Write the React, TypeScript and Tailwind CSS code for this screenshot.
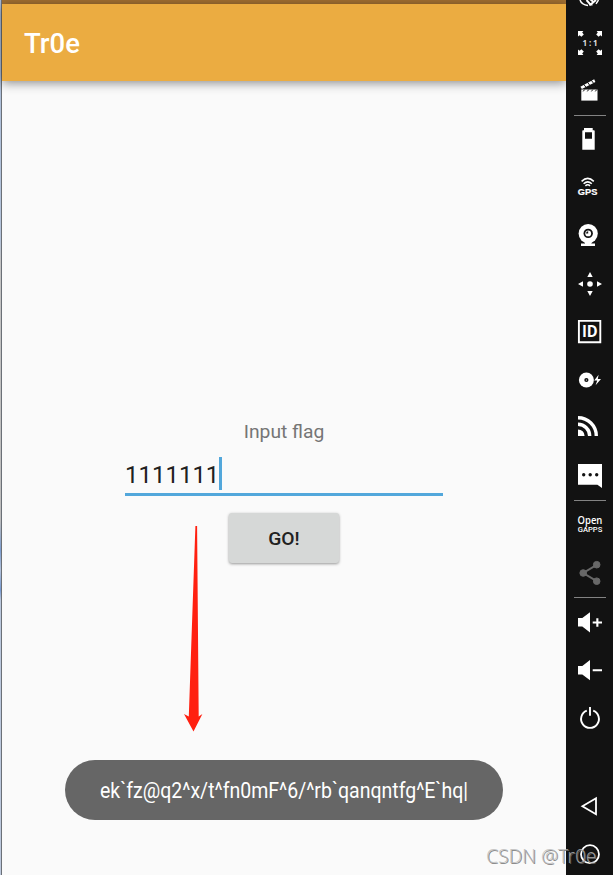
import type { ReactNode } from 'react';

const TOAST_TEXT = 'ek`fz@q2^x/t^fn0mF^6/^rb`qanqntfg^E`hq|';

function ToolIcon({ children, label }: { children: ReactNode; label: string }) {
  return (
    <button className="block h-12 w-[47px] shrink-0 text-white" aria-label={label}>
      <svg className="block" width="47" height="48" viewBox="0 0 47 48" fill="currentColor">
        {children}
      </svg>
    </button>
  );
}

function Divider() {
  return <div className="mx-2 h-px w-8 shrink-0 bg-[#838383]" />;
}

function Toolbar() {
  return (
    <aside className="flex h-full w-[47px] shrink-0 flex-col overflow-hidden bg-[#121212]">
      <div className="h-[19px] shrink-0 text-white">
        <svg width="47" height="19" viewBox="0 0 47 19" fill="none" stroke="currentColor">
          <path d="M14 0c1 3 4 5 8 5.4" strokeWidth="1.5" />
          <path d="M20.5 0l4 4.6L30 0M24 -1l3.5 3M23 4.6h3.5" strokeWidth="2" />
          <path d="M30 3.8L32.5 0" strokeWidth="1.4" />
        </svg>
      </div>
      <ToolIcon label="Pixel perfect">
        <path d="M12 12h5.4l-1.2 1.6 1.6 1.8-2.4 2.4-1.8-1.6-1.6 1.2zM36 12v5.4l-1.6-1.2-1.8 1.6-2.4-2.4 1.6-1.8-1.2-1.6zM12 36v-5.4l1.6 1.2 1.8-1.6 2.4 2.4-1.6 1.8 1.2 1.6zM36 36h-5.4l1.2-1.6-1.6-1.8 2.4-2.4 1.8 1.6 1.6-1.2z" />
        <text
          x="16.6"
          y="26.9"
          fontSize="8"
          fontWeight="700"
          fontFamily="'Open Sans'"
          textLength="15"
          className="fill-[#dddddd]"
        >
          1 : 1
        </text>
      </ToolIcon>
      <ToolIcon label="Screencast">
        <path d="M15.3 22.5H31.5V33.6H15.3z" />
        <path d="M14.4 19.8L28.2 12.3l1.2 2.6-13.5 7.2z" />
        <path
          d="M17.6 17.2l2.2 2.8M21.4 15.2l2.2 2.8M25.2 13.2l2.2 2.8M17.2 24.4l1.4-1.8M21.3 24.4l1.4-1.8M25.4 24.4l1.4-1.8M29.3 24.4l1.4-1.8"
          stroke="#121212"
          strokeWidth="1"
        />
      </ToolIcon>
      <Divider />
      <ToolIcon label="Battery">
        <path
          fillRule="evenodd"
          d="M18 12h8.7v2.2h1.2q.8 0 .8.8v18.7H16.3V15q0-.8.8-.8H18zM19 16.3v6.5h7v-6.5z"
        />
      </ToolIcon>
      <ToolIcon label="GPS">
        <g fill="none" stroke="currentColor" strokeWidth="1.5">
          <path d="M15.6 17.4q6.1-6 12.2 0M17.6 19.8q4.1-3.8 8.2 0" />
          <path d="M19.4 21.9q2.3-2.2 4.6 0" />
        </g>
        <text
          x="11.8"
          y="31"
          fontSize="9.2"
          fontWeight="700"
          fontFamily="'Liberation Sans'"
          textLength="19.6"
          lengthAdjust="spacingAndGlyphs"
          stroke="currentColor"
          strokeWidth="0.2"
        >
          GPS
        </text>
      </ToolIcon>
      <ToolIcon label="Camera">
        <circle cx="22.2" cy="21.6" r="9.6" />
        <path d="M19 29h6.4v2.6H29V34H15v-2.4h4z" />
        <circle cx="22.2" cy="21.4" r="4.7" fill="#121212" />
        <circle cx="22.2" cy="21.4" r="2.9" />
        <path d="M22.2 21.4v-2.2a2.2 2.2 0 0 0-2.2 2.2z" fill="#121212" />
      </ToolIcon>
      <ToolIcon label="Rotate">
        <circle cx="24" cy="24" r="2.8" />
        <path d="M24 12l2.7 5h-5.4zM24 36l2.7-5h-5.4zM12 24l5-2.7v5.4zM36 24l-5-2.7v5.4z" />
      </ToolIcon>
      <ToolIcon label="Identifiers">
        <path d="M12.9 12.9h21.4v21.4H12.9z" fill="none" stroke="currentColor" strokeWidth="1.9" />
        <text
          x="15.9"
          y="29.4"
          fontSize="15.8"
          fontWeight="700"
          fontFamily="'Open Sans'"
          textLength="15.8"
          lengthAdjust="spacingAndGlyphs"
        >
          ID
        </text>
      </ToolIcon>
      <ToolIcon label="Disk IO">
        <circle cx="20.4" cy="24" r="7.5" />
        <circle cx="20.4" cy="24" r="2.1" fill="#121212" />
        <circle cx="20.4" cy="24" r="0.6" />
        <path d="M32.6 18.8l-4.4 5.7h3l-1.6 4.7 5.4-6.3h-3.2z" />
      </ToolIcon>
      <ToolIcon label="Network">
        <g fill="none" stroke="currentColor" strokeWidth="3.4">
          <path d="M12 13.7A18.3 18.3 0 0 1 30.3 32" />
          <path d="M12 20.3A11.7 11.7 0 0 1 23.7 32" />
        </g>
        <path d="M12 25.4A6.6 6.6 0 0 1 18.6 32H12z" />
      </ToolIcon>
      <ToolIcon label="Phone">
        <path d="M12 12h24v24l-4.6-3.3H12z" />
        <g fill="#121212">
          <circle cx="17.7" cy="22.7" r="1.7" />
          <circle cx="24.2" cy="22.7" r="1.7" />
          <circle cx="30.7" cy="22.7" r="1.7" />
        </g>
      </ToolIcon>
      <Divider />
      <ToolIcon label="Open GApps">
        <text
          x="11.6"
          y="23"
          fontSize="10.6"
          fontWeight="600"
          fontFamily="'Open Sans'"
          textLength="24.8"
          lengthAdjust="spacingAndGlyphs"
        >
          Open
        </text>
        <text
          x="11.7"
          y="31.2"
          fontSize="7.2"
          fontWeight="500"
          fontFamily="Roboto"
          textLength="24.6"
          lengthAdjust="spacingAndGlyphs"
        >
          GAPPS
        </text>
      </ToolIcon>
      <ToolIcon label="Share">
        <g fill="#686868" stroke="#686868">
          <path d="M30.7 15.8L17.2 24l13.5 8.2" fill="none" strokeWidth="2" />
          <circle cx="30.7" cy="15.7" r="3.3" />
          <circle cx="17.2" cy="24" r="3.3" />
          <circle cx="30.7" cy="32.2" r="3.3" />
        </g>
      </ToolIcon>
      <Divider />
      <ToolIcon label="Volume up">
        <path d="M12 20h4.3L24 14.2v20.2l-7.7-5.8H12zM30.3 20.3h2.1v3.2H36v2.1h-3.6v3.2h-2.1v-3.2h-3.6v-2.1h3.6z" />
      </ToolIcon>
      <ToolIcon label="Volume down">
        <path d="M12 20h4.3L24 14v20.2l-7.7-5.8H12zM26.7 23.2H36v2.1h-9.3z" />
      </ToolIcon>
      <ToolIcon label="Power">
        <path
          d="M20.8 16.7a8.9 8.9 0 1 0 6.4 0M24 13v8.8"
          fill="none"
          stroke="currentColor"
          strokeWidth="1.9"
        />
      </ToolIcon>
      <div className="h-[39px] shrink-0" />
      <ToolIcon label="Back">
        <path
          d="M30 17.3v16L16.4 25.3z"
          fill="none"
          stroke="currentColor"
          strokeWidth="1.8"
        />
      </ToolIcon>
      <ToolIcon label="Home">
        <circle cx="24" cy="25.2" r="9" fill="none" stroke="currentColor" strokeWidth="1.8" />
      </ToolIcon>
    </aside>
  );
}

function FlagForm() {
  return (
    <form className="flex flex-col items-center pt-[339px]">
      <label className="text-[19.25px] leading-6 text-[#757575]">Input flag</label>
      <div className="mt-[13px] flex h-[39px] w-[318px] items-start border-b-[3px] border-[#52a7db]">
        <span className="-mr-[3px] origin-left scale-x-[0.975] text-[24.6px] leading-9 text-[#212121]">
          1111111
        </span>
        <span className="h-[33px] w-[3px] bg-[#52a7db]" />
      </div>
      <button
        type="button"
        className="mt-[17px] h-[50px] w-[110px] rounded-[3px] bg-[#d6d8d7] pt-[3px] text-[19.25px] font-medium text-[#212121] shadow-[0_1px_3px_rgba(0,0,0,0.4)]"
      >
        GO!
      </button>
    </form>
  );
}

export default function App() {
  return (
    <div className="relative flex h-[875px] w-[613px] overflow-hidden bg-[#fafafa] font-[Roboto,sans-serif]">
      <div className="w-0.5 shrink-0 border-r border-[#6b7077] bg-[linear-gradient(to_bottom,#a9bcd8_0,#b4c3da_240px,#c4c4c4_260px,#bdbdbd_520px,#7c9dd0_550px,#b3c2da_570px,#7599d2_590px,#bac7dc_600px,#bcc8dc_100%)]" />
      <main className="flex w-[564px] shrink-0 flex-col">
        <div className="h-1 shrink-0 bg-[#a27032]" />
        <header className="flex h-[77px] shrink-0 items-center bg-[#ebac41] pt-0.5 pl-[22px] shadow-[0_2px_10px_rgba(0,0,0,0.45)]">
          <h1 className="text-[27.5px] font-medium text-white">Tr0e</h1>
        </header>
        <FlagForm />
        <div className="mt-[197px] ml-[63px] flex h-[60px] w-[438px] items-center rounded-full bg-[#666666] pt-[3px] pl-[35px]">
          <span className="origin-left scale-x-[0.907] text-[21.5px] whitespace-nowrap text-white">
            {TOAST_TEXT}
          </span>
        </div>
      </main>
      <Toolbar />
      <svg
        className="absolute top-[525px] left-[183px]"
        width="20"
        height="207"
        viewBox="0 0 20 207"
        fill="#ff2010"
      >
        <path d="M12.4 1h1.7L15.7 191.5 19.4 189 10.5 206.5 1 189l4.8 2.5z" />
      </svg>
      <div className="absolute top-[842px] left-[486px] font-['Noto_Sans',sans-serif] text-[19.2px] leading-[28px] font-light whitespace-nowrap text-[#b8b8b8]/80 [text-shadow:1px_1px_0_rgba(110,110,110,0.8)]">
        CSDN @Tr0e
      </div>
    </div>
  );
}
